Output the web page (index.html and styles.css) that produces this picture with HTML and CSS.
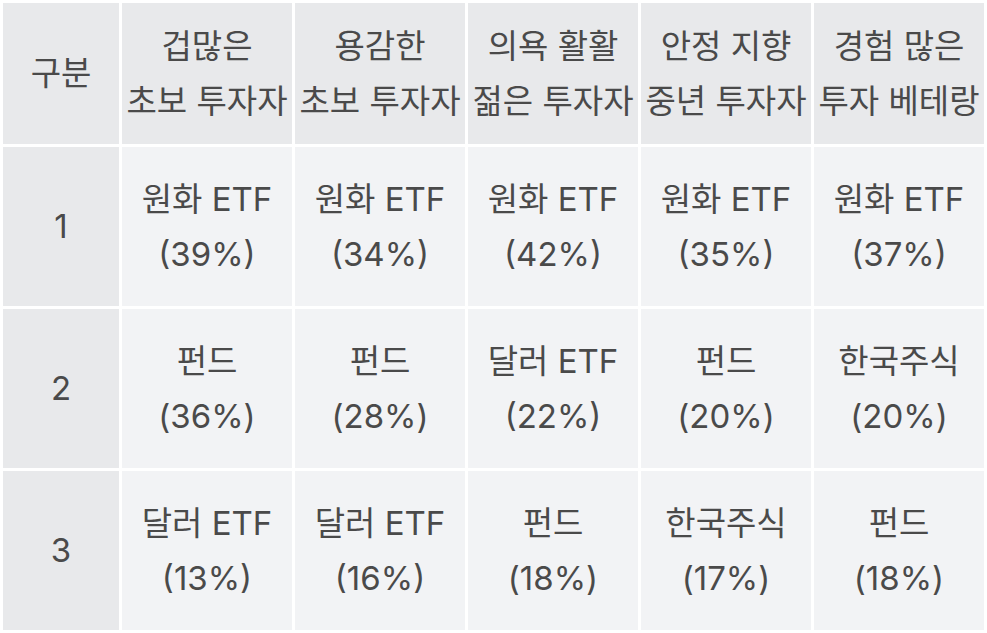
FILE: index.html
```html
<!DOCTYPE html>
<html lang="ko">
<head>
<meta charset="utf-8">
<link rel="stylesheet" href="styles.css">
</head>
<body>
<div class="table">
  <div class="cell head">구분</div>
  <div class="cell head">겁많은<br>초보 투자자</div>
  <div class="cell head">용감한<br>초보 투자자</div>
  <div class="cell head">의욕 활활<br>젊은 투자자</div>
  <div class="cell head">안정 지향<br>중년 투자자</div>
  <div class="cell head">경험 많은<br>투자 베테랑</div>

  <div class="cell head">1</div>
  <div class="cell">원화 ETF<br>(39%)</div>
  <div class="cell">원화 ETF<br>(34%)</div>
  <div class="cell">원화 ETF<br>(42%)</div>
  <div class="cell">원화 ETF<br>(35%)</div>
  <div class="cell">원화 ETF<br>(37%)</div>

  <div class="cell head">2</div>
  <div class="cell">펀드<br>(36%)</div>
  <div class="cell">펀드<br>(28%)</div>
  <div class="cell">달러 ETF<br>(22%)</div>
  <div class="cell">펀드<br>(20%)</div>
  <div class="cell">한국주식<br>(20%)</div>

  <div class="cell head">3</div>
  <div class="cell">달러 ETF<br>(13%)</div>
  <div class="cell">달러 ETF<br>(16%)</div>
  <div class="cell">펀드<br>(18%)</div>
  <div class="cell">한국주식<br>(17%)</div>
  <div class="cell">펀드<br>(18%)</div>
</div>
</body>
</html>
```
FILE: styles.css
```css
html, body {
  margin: 0;
  padding: 0;
  background: #ffffff;
}
.table {
  display: grid;
  grid-template-columns: 116px repeat(5, 1fr);
  grid-template-rows: 141px 159px 159px 159px;
  gap: 3px;
  padding: 3px;
  width: 987px;
  height: 633px;
  box-sizing: border-box;
  font-family: "Inter", "Noto Sans CJK KR", sans-serif;
  font-size: 33px;
  line-height: 55px;
  color: #4a4a4a;
}
.cell {
  background: #f2f3f5;
  display: flex;
  align-items: center;
  justify-content: center;
  text-align: center;
  white-space: nowrap;
}
.head {
  background: #e8e9eb;
}
```
